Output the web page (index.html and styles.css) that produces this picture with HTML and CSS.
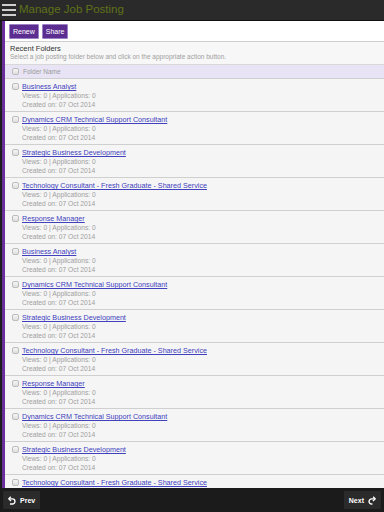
FILE: index.html
```html
<!DOCTYPE html>
<html lang="en">
<head>
  <meta charset="UTF-8">
  <title>Manage Job Posting</title>
  <link rel="stylesheet" href="styles.css">
</head>
<body>
  <div class="app">
    <header class="topbar">
      <svg class="menu-icon" width="14" height="13" viewBox="0 0 14 13">
        <rect x="0" y="0" width="14" height="2" fill="#cfcfcf"/>
        <rect x="0" y="5" width="14" height="2" fill="#cfcfcf"/>
        <rect x="0" y="10" width="14" height="2" fill="#cfcfcf"/>
      </svg>
      <h1 class="title">Manage Job Posting</h1>
    </header>

    <div class="page">
      <div class="toolbar">
        <button class="btn">Renew</button>
        <button class="btn">Share</button>
      </div>

      <div class="intro">
        <div class="intro-title">Recent Folders</div>
        <div class="intro-text">Select a job posting folder below and click on the appropriate action button.</div>
      </div>

      <div class="list">
        <div class="list-head">
          <span class="check"></span>
          <span>Folder Name</span>
        </div>
        <div class="rows" id="rows"></div>
      </div>
    </div>

    <footer class="footbar">
      <button class="nav-btn">
        <svg width="8" height="9" viewBox="0 0 10 11"><path d="M3.5 0.8 L1 3.5 L3.8 6" fill="none" stroke="#fff" stroke-width="1.7"/><path d="M1.5 3.5 H5.5 A3.2 3.2 0 0 1 5.5 9.9 H2.5" fill="none" stroke="#fff" stroke-width="1.7"/></svg>
        Prev
      </button>
      <button class="nav-btn">
        Next
        <svg width="8" height="9" viewBox="0 0 10 11"><path d="M6.5 0.8 L9 3.5 L6.2 6" fill="none" stroke="#fff" stroke-width="1.7"/><path d="M8.5 3.5 H4.5 A3.2 3.2 0 0 0 4.5 9.9 H5.5" fill="none" stroke="#fff" stroke-width="1.7"/></svg>
      </button>
    </footer>
  </div>

  <script>
    const titles = [
      'Business Analyst',
      'Dynamics CRM Technical Support Consultant',
      'Strategic Business Development',
      'Technology Consultant - Fresh Graduate - Shared Service',
      'Response Manager',
      'Business Analyst',
      'Dynamics CRM Technical Support Consultant',
      'Strategic Business Development',
      'Technology Consultant - Fresh Graduate - Shared Service',
      'Response Manager',
      'Dynamics CRM Technical Support Consultant',
      'Strategic Business Development',
      'Technology Consultant - Fresh Graduate - Shared Service'
    ];
    const rows = document.getElementById('rows');
    titles.forEach(t => {
      const row = document.createElement('div');
      row.className = 'row';
      row.innerHTML =
        '<span class="check"></span>' +
        '<div class="row-body">' +
          '<a href="#" class="row-link">' + t + '</a>' +
          '<div class="meta">Views: 0 | Applications: 0</div>' +
          '<div class="meta">Created on: 07 Oct 2014</div>' +
        '</div>';
      rows.appendChild(row);
    });
  </script>
</body>
</html>
```

FILE: styles.css
```css
html, body {
  margin: 0;
  padding: 0;
}

body {
  background: #1d1d1d;
  font-family: "Liberation Sans", Arial, sans-serif;
}

.app {
  width: 384px;
  height: 512px;
  display: flex;
  flex-direction: column;
  overflow: hidden;
}

.topbar {
  height: 21px;
  flex: none;
  display: flex;
  align-items: center;
  gap: 3px;
  padding-left: 2px;
  background: #2a2a2a;
  border-bottom: 1px solid #111;
  box-sizing: border-box;
}

.menu-icon {
  flex: none;
  margin-top: 1px;
}

.title {
  margin: 0;
  font-size: 11.5px;
  font-weight: normal;
  color: #5f7219;
  line-height: 1;
}

.page {
  flex: 1;
  min-height: 0;
  overflow: hidden;
  margin-left: 2px;
  border-left: 3px solid #6a2e9c;
  background: #f5f5f5;
}

.toolbar {
  display: flex;
  gap: 3px;
  padding: 3px 4px 2px;
  background: #fff;
  border-bottom: 1px solid #cfcfcf;
}

.btn {
  height: 15px;
  padding: 0 3px;
  font-family: inherit;
  font-size: 7px;
  color: #fff;
  background: #5c2d91;
  border: 1px solid #9b80c4;
  border-radius: 1px;
  line-height: 1;
}

.intro {
  padding: 2px 5px 3px;
  background: #f7f7f7;
  border-bottom: 1px solid #d8d8d8;
}

.intro-title {
  font-size: 7.5px;
  color: #333;
  line-height: 9px;
}

.intro-text {
  font-size: 6.5px;
  color: #a0a0a0;
  line-height: 8px;
}

.list-head {
  display: flex;
  align-items: center;
  gap: 4px;
  height: 13px;
  padding-left: 7px;
  background: #e8e4f5;
  border-bottom: 1px solid #cfcfcf;
  font-size: 6.5px;
  color: #9a9a9a;
}

.check {
  flex: none;
  width: 7px;
  height: 7px;
  border: 1px solid #bcbcbc;
  border-radius: 2px;
  background: linear-gradient(#f6f6f6, #dedede);
  box-sizing: border-box;
}

.row {
  display: flex;
  align-items: flex-start;
  gap: 3px;
  padding: 3px 5px 0 7px;
  height: 33px;
  box-sizing: border-box;
  border-bottom: 1px solid #cfcfcf;
}

.row .check {
  margin-top: 1px;
}

.row-body {
  display: flex;
  flex-direction: column;
}

.row-link {
  font-size: 7.2px;
  line-height: 9px;
  color: #4141be;
}

.meta {
  font-size: 6.7px;
  line-height: 9px;
  color: #a0a0a0;
}

.footbar {
  flex: none;
  height: 24px;
  display: flex;
  justify-content: space-between;
  align-items: center;
  padding: 0 3px 0 3px;
  background: #1b1b1b;
}

.nav-btn {
  display: flex;
  align-items: center;
  gap: 4px;
  height: 18px;
  padding: 0 5px;
  font-family: inherit;
  font-size: 7px;
  font-weight: bold;
  color: #fff;
  background: #2b2b2b;
  border: none;
  border-radius: 1px;
}
```
